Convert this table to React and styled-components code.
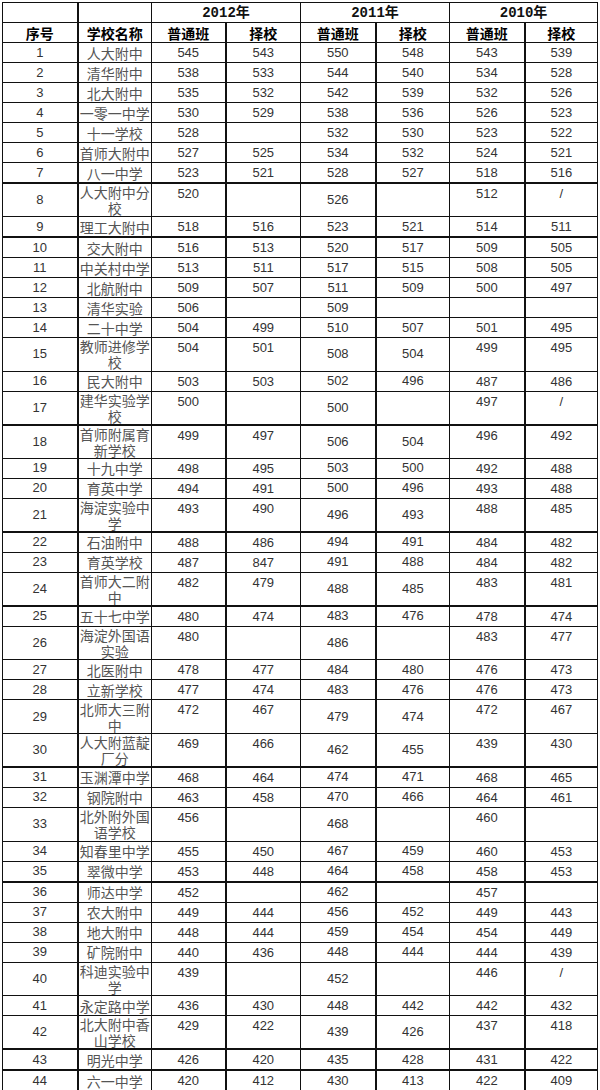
import React from "react";
import styled, { createGlobalStyle } from "styled-components";

const GlobalStyle = createGlobalStyle`
  html, body {
    margin: 0;
    padding: 0;
    background: #fff;
  }
  body {
    font-family: "Liberation Sans", "Noto Sans CJK SC", sans-serif;
  }
`;

const Sheet = styled.table`
  margin: 2px 0 0 2px;
  width: 595px;
  table-layout: fixed;
  border-collapse: collapse;
  color: #333;

  td {
    border: 1px solid #111;
    padding: 0;
    text-align: center;
    overflow: hidden;
  }
  tbody td:nth-child(odd),
  thead tr:last-child td:nth-child(odd) {
    border-right-width: 2px;
  }
  thead tr:first-child td:first-child {
    border-right-width: 2px;
  }
`;

const HeadRow = styled.tr`
  height: 20px;
`;

const HeadCell = styled.td`
  font-family: "Noto Sans CJK SC", sans-serif;
  font-weight: 700;
  font-size: 14px;
  line-height: 18px;
  color: #000;
  vertical-align: middle;
`;

const YearCell = styled.td`
  font-family: "Liberation Mono", "Noto Sans CJK SC", monospace;
  font-weight: 700;
  font-size: 14px;
  line-height: 18px;
  color: #111;
  vertical-align: middle;
`;

const Row = styled.tr`
  height: ${(p) => (p.$double ? 33.6 : 20) - (p.$heavy ? 1 : 0)}px;
  td {
    border-bottom-width: ${(p) => (p.$heavy ? 2 : 1)}px;
  }
`;

const SeqCell = styled.td`
  font-size: 13px;
  line-height: 18px;
  color: #333;
  vertical-align: middle;
`;

const NameCell = styled.td`
  font-family: "Noto Sans CJK SC", sans-serif;
  font-size: 14px;
  font-weight: 400;
  line-height: ${(p) => (p.$double ? 16 : 18)}px;
  color: #555;
  white-space: pre-line;
  vertical-align: middle;
`;

const NumCell = styled.td`
  font-size: 13px;
  line-height: 18px;
  color: #333;
  vertical-align: ${(p) => (p.$middle ? "middle" : "top")};
  padding-top: ${(p) => (p.$middle ? 0 : 1)}px !important;
`;

const columns = [75, 74, 74, 75, 75, 74, 75, 73];

// 学校, 2012普通, 2012择校, 2011普通, 2011择校, 2010普通, 2010择校
const schools = [
  ["人大附中", 545, 543, 550, 548, 543, 539],
  ["清华附中", 538, 533, 544, 540, 534, 528],
  ["北大附中", 535, 532, 542, 539, 532, 526],
  ["一零一中学", 530, 529, 538, 536, 526, 523],
  ["十一学校", 528, "", 532, 530, 523, 522],
  ["首师大附中", 527, 525, 534, 532, 524, 521],
  ["八一中学", 523, 521, 528, 527, 518, 516],
  ["人大附中分\n校", 520, "", 526, "", 512, "/"],
  ["理工大附中", 518, 516, 523, 521, 514, 511],
  ["交大附中", 516, 513, 520, 517, 509, 505],
  ["中关村中学", 513, 511, 517, 515, 508, 505],
  ["北航附中", 509, 507, 511, 509, 500, 497],
  ["清华实验", 506, "", 509, "", "", ""],
  ["二十中学", 504, 499, 510, 507, 501, 495],
  ["教师进修学\n校", 504, 501, 508, 504, 499, 495],
  ["民大附中", 503, 503, 502, 496, 487, 486],
  ["建华实验学\n校", 500, "", 500, "", 497, "/"],
  ["首师附属育\n新学校", 499, 497, 506, 504, 496, 492],
  ["十九中学", 498, 495, 503, 500, 492, 488],
  ["育英中学", 494, 491, 500, 496, 493, 488],
  ["海淀实验中\n学", 493, 490, 496, 493, 488, 485],
  ["石油附中", 488, 486, 494, 491, 484, 482],
  ["育英学校", 487, 847, 491, 488, 484, 482],
  ["首师大二附\n中", 482, 479, 488, 485, 483, 481],
  ["五十七中学", 480, 474, 483, 476, 478, 474],
  ["海淀外国语\n实验", 480, "", 486, "", 483, 477],
  ["北医附中", 478, 477, 484, 480, 476, 473],
  ["立新学校", 477, 474, 483, 476, 476, 473],
  ["北师大三附\n中", 472, 467, 479, 474, 472, 467],
  ["人大附蓝靛\n厂分", 469, 466, 462, 455, 439, 430],
  ["玉渊潭中学", 468, 464, 474, 471, 468, 465],
  ["钢院附中", 463, 458, 470, 466, 464, 461],
  ["北外附外国\n语学校", 456, "", 468, "", 460, ""],
  ["知春里中学", 455, 450, 467, 459, 460, 453],
  ["翠微中学", 453, 448, 464, 458, 458, 453],
  ["师达中学", 452, "", 462, "", 457, ""],
  ["农大附中", 449, 444, 456, 452, 449, 443],
  ["地大附中", 448, 444, 459, 454, 454, 449],
  ["矿院附中", 440, 436, 448, 444, 444, 439],
  ["科迪实验中\n学", 439, "", 452, "", 446, "/"],
  ["永定路中学", 436, 430, 448, 442, 442, 432],
  ["北大附中香\n山学校", 429, 422, 439, 426, 437, 418],
  ["明光中学", 426, 420, 435, 428, 431, 422],
  ["六一中学", 420, 412, 430, 413, 422, 409],
];

// rows whose lower rule prints heavier in the scan
const heavyRows = [7, 9, 17, 21, 24, 30, 35, 42, 43];

const App = () => {
  return (
    <>
      <GlobalStyle />
      <Sheet>
        <colgroup>
          {columns.map((w, i) => (
            <col key={i} style={{ width: w }} />
          ))}
        </colgroup>
        <thead>
          <HeadRow>
            <HeadCell />
            <HeadCell />
            <YearCell colSpan={2}>2012年</YearCell>
            <YearCell colSpan={2}>2011年</YearCell>
            <YearCell colSpan={2}>2010年</YearCell>
          </HeadRow>
          <HeadRow>
            <HeadCell>序号</HeadCell>
            <HeadCell>学校名称</HeadCell>
            <HeadCell>普通班</HeadCell>
            <HeadCell>择校</HeadCell>
            <HeadCell>普通班</HeadCell>
            <HeadCell>择校</HeadCell>
            <HeadCell>普通班</HeadCell>
            <HeadCell>择校</HeadCell>
          </HeadRow>
        </thead>
        <tbody>
          {schools.map(([name, ...scores], i) => {
            const double = name.includes("\n");
            return (
              <Row key={i} $double={double} $heavy={heavyRows.includes(i + 1)}>
                <SeqCell>{i + 1}</SeqCell>
                <NameCell $double={double}>{name}</NameCell>
                {scores.map((s, j) => (
                  <NumCell key={j} $middle={j === 2 || j === 3}>
                    {s}
                  </NumCell>
                ))}
              </Row>
            );
          })}
        </tbody>
      </Sheet>
    </>
  );
};

export default App;
